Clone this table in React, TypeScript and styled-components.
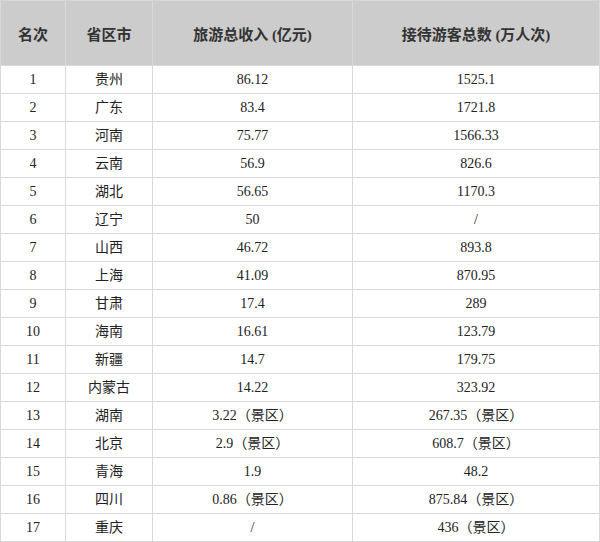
import * as React from 'react';
import styled, { createGlobalStyle } from 'styled-components';

interface Row {
	rank: number;
	region: string;
	income: string;
	visitors: string;
}

const rows: Row[] = [
	{ rank: 1, region: '贵州', income: '86.12', visitors: '1525.1' },
	{ rank: 2, region: '广东', income: '83.4', visitors: '1721.8' },
	{ rank: 3, region: '河南', income: '75.77', visitors: '1566.33' },
	{ rank: 4, region: '云南', income: '56.9', visitors: '826.6' },
	{ rank: 5, region: '湖北', income: '56.65', visitors: '1170.3' },
	{ rank: 6, region: '辽宁', income: '50', visitors: '/' },
	{ rank: 7, region: '山西', income: '46.72', visitors: '893.8' },
	{ rank: 8, region: '上海', income: '41.09', visitors: '870.95' },
	{ rank: 9, region: '甘肃', income: '17.4', visitors: '289' },
	{ rank: 10, region: '海南', income: '16.61', visitors: '123.79' },
	{ rank: 11, region: '新疆', income: '14.7', visitors: '179.75' },
	{ rank: 12, region: '内蒙古', income: '14.22', visitors: '323.92' },
	{ rank: 13, region: '湖南', income: '3.22（景区）', visitors: '267.35（景区）' },
	{ rank: 14, region: '北京', income: '2.9（景区）', visitors: '608.7（景区）' },
	{ rank: 15, region: '青海', income: '1.9', visitors: '48.2' },
	{ rank: 16, region: '四川', income: '0.86（景区）', visitors: '875.84（景区）' },
	{ rank: 17, region: '重庆', income: '/', visitors: '436（景区）' },
];

const GlobalStyle = createGlobalStyle`
	html, body {
		margin: 0;
		padding: 0;
		background: #ffffff;
	}
`;

const Table = styled.table`
	width: 600px;
	table-layout: fixed;
	border-collapse: separate;
	border-spacing: 0;
	border-top: 1px solid #d9d9d9;
	border-left: 1px solid #d9d9d9;
	font-family: "Liberation Serif", "Noto Sans CJK SC", serif;
	color: #222222;
`;

const HeadCell = styled.th`
	box-sizing: border-box;
	height: 65px;
	padding: 0 4px;
	background: #cccccc;
	border-right: 1px solid #d9d9d9;
	border-bottom: 1px solid #d9d9d9;
	font-size: 15px;
	font-weight: bold;
	color: #333333;
	text-align: center;
	vertical-align: middle;
`;

const Cell = styled.td`
	box-sizing: border-box;
	height: 28px;
	padding: 0 4px;
	border-right: 1px solid #d9d9d9;
	border-bottom: 1px solid #d9d9d9;
	font-size: 14px;
	line-height: 16px;
	text-align: center;
	vertical-align: middle;
	white-space: nowrap;
`;

export default function App() {
	return (
		<>
			<GlobalStyle />
			<Table>
				<colgroup>
					<col style={{ width: 65 }} />
					<col style={{ width: 87 }} />
					<col style={{ width: 200 }} />
					<col style={{ width: 247 }} />
				</colgroup>
				<thead>
					<tr>
						<HeadCell>名次</HeadCell>
						<HeadCell>省区市</HeadCell>
						<HeadCell>旅游总收入 (亿元)</HeadCell>
						<HeadCell>接待游客总数 (万人次)</HeadCell>
					</tr>
				</thead>
				<tbody>
					{rows.map((row) => (
						<tr key={row.rank}>
							<Cell>{row.rank}</Cell>
							<Cell>{row.region}</Cell>
							<Cell>{row.income}</Cell>
							<Cell>{row.visitors}</Cell>
						</tr>
					))}
				</tbody>
			</Table>
		</>
	);
}
